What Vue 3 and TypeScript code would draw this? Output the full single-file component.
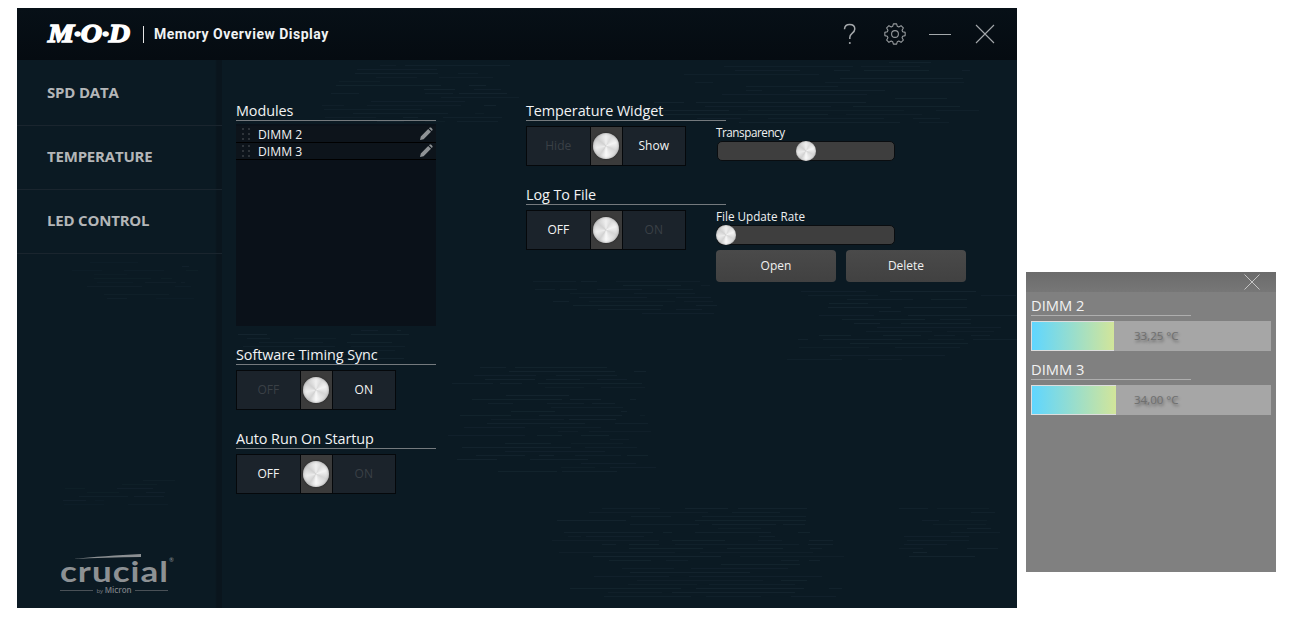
<script setup lang="ts">
const gearPath = (() => {
  const cx = 12, cy = 12, teeth = 8, ro = 10.3, ri = 8
  const pts: string[] = []
  for (let i = 0; i < teeth; i++) {
    const a = (i / teeth) * Math.PI * 2 - Math.PI / 2
    const step = (Math.PI * 2) / teeth
    const offs: [number, number][] = [[-0.3, ri], [-0.16, ro], [0.16, ro], [0.3, ri]]
    for (const [f, r] of offs) {
      const t = a + f * step * 1.25
      pts.push(`${(cx + Math.cos(t) * r).toFixed(2)} ${(cy + Math.sin(t) * r).toFixed(2)}`)
    }
  }
  return 'M' + pts.join('L') + 'Z'
})()

interface Dash { x: number; y: number; w: number; o: number }
let seed = 23
const rnd = () => {
  seed = (seed * 16807) % 2147483647
  return seed / 2147483647
}
const clusters: [number, number, number, number][] = [
  [533, 281, 186, 36],
  [786, 291, 234, 70],
  [447, 367, 213, 108],
  [551, 508, 294, 92],
  [879, 508, 126, 50],
  [320, 65, 200, 60],
  [640, 62, 360, 64],
  [230, 330, 180, 30],
  [70, 262, 130, 40],
  [60, 480, 120, 30]
]
const dashes: Dash[] = []
clusters.forEach(([cx, cy, cw, ch], idx) => {
  const faint = idx >= 8
  for (let y = 0; y < ch; y += 4) {
    let x = cx + rnd() * cw * 0.3
    const end = cx + cw - rnd() * cw * 0.25
    while (x < end) {
      const w = Math.min(8 + rnd() * cw * 0.5, end - x)
      if (rnd() > 0.22) {
        dashes.push({
          x: Math.round(x - 17),
          y: cy + y - 60,
          w: Math.round(w),
          o: (faint ? 0.02 : 0.035) + rnd() * 0.03
        })
      }
      x += w + 4 + rnd() * 30
    }
  }
})

const modules = ['DIMM 2', 'DIMM 3']
const temps = [
  { name: 'DIMM 2', value: '33,25 °C', fill: 83 },
  { name: 'DIMM 3', value: '34,00 °C', fill: 85 }
]
const navItems = ['SPD DATA', 'TEMPERATURE', 'LED CONTROL']
</script>

<template>
  <div class="page">
    <div class="window">
      <header class="topbar">
        <div class="brand">
          <span class="logo-box"><span class="logo">M·O·D</span></span>
          <span class="divider"></span>
          <span class="title">Memory Overview Display</span>
        </div>
        <div class="controls">
          <svg class="ctl ctl-help" width="16" height="24" viewBox="0 0 16 24" fill="none" stroke="#a4a8ab" stroke-width="1.5">
            <path d="M2.5 7.2C2.7 3.8 5 2.6 7.6 2.6c3 0 5.2 1.7 5.2 4.4 0 2-1 3-2.7 4.3-1.6 1.200-2.300 2.300-2.300 4.300v1.400" />
            <circle cx="7.800" cy="21" r="1" fill="#a4a8ab" stroke="none" />
          </svg>
          <svg class="ctl ctl-gear" width="24" height="24" viewBox="0 0 24 24" fill="none" stroke="#969a9d" stroke-width="1.100">
            <path :d="gearPath" stroke-linejoin="round" />
            <circle cx="12" cy="12" r="3.400" />
          </svg>
          <svg class="ctl ctl-min" width="22" height="24" viewBox="0 0 22 24" fill="none" stroke="#a4a8ab" stroke-width="1">
            <path d="M0 12.500h22" />
          </svg>
          <svg class="ctl ctl-close" width="20" height="20" viewBox="0 0 20 20" fill="none" stroke="#a4a8ab" stroke-width="1.100">
            <path d="M1 1l18 18M19 1L1 19" />
          </svg>
        </div>
      </header>
      <div class="body">
        <svg class="texture" width="1000" height="548" viewBox="0 0 1000 548" aria-hidden="true">
          <rect v-for="(d, i) in dashes" :key="i" :x="d.x" :y="d.y" :width="d.w" height="1" fill="#8fb4cc" :opacity="d.o" />
        </svg>
        <aside class="sidebar">
          <nav class="nav">
            <div v-for="item in navItems" :key="item" class="nav-item">{{ item }}</div>
          </nav>
          <div class="crucial">
            <svg class="swoosh" width="68" height="5" viewBox="0 0 68 5"><path d="M0 5C20 3 44 1 68 0v3C44 3 22 4 0 5z" fill="#8b8f92" /></svg>
            <div class="crucial-word">crucial<sup>®</sup></div>
            <div class="micron"><i></i><span>by <b>Micron</b></span><i></i></div>
          </div>
        </aside>
        <main class="content">
          <section class="col col-left">
            <h2 class="heading">Modules</h2>
            <div class="list">
              <div v-for="m in modules" :key="m" class="list-row">
                <span class="grip"><i v-for="n in 6" :key="n"></i></span>
                <span class="list-name">{{ m }}</span>
                <svg class="pencil" width="14" height="14" viewBox="0 0 14 14">
                  <path d="M1 13l.8-3.600L9.200 2l2.800 2.800-7.400 7.400zM10 1.200l.8-.6c.4-.3.900-.3 1.200 0l1.400 1.400c.3.300.3.800 0 1.200l-.6.8z" fill="#8f9396" />
                </svg>
              </div>
            </div>
            <h2 class="heading heading-gap">Software Timing Sync</h2>
            <div class="toggle">
              <span class="side off">OFF</span>
              <span class="knob-cell"><span class="knob"></span></span>
              <span class="side">ON</span>
            </div>
            <h2 class="heading heading-gap">Auto Run On Startup</h2>
            <div class="toggle">
              <span class="side">OFF</span>
              <span class="knob-cell"><span class="knob"></span></span>
              <span class="side off">ON</span>
            </div>
          </section>
          <section class="col col-right">
            <h2 class="heading">Temperature Widget</h2>
            <div class="setting">
              <div class="toggle">
                <span class="side off">Hide</span>
                <span class="knob-cell"><span class="knob"></span></span>
                <span class="side">Show</span>
              </div>
              <div class="slider-box">
                <div class="slider-label tight">Transparency</div>
                <div class="slider"><span class="thumb thumb-mid"></span></div>
              </div>
            </div>
            <h2 class="heading heading-gap">Log To File</h2>
            <div class="setting">
              <div class="toggle">
                <span class="side">OFF</span>
                <span class="knob-cell"><span class="knob"></span></span>
                <span class="side off">ON</span>
              </div>
              <div class="slider-box">
                <div class="slider-label">File Update Rate</div>
                <div class="slider"><span class="thumb"></span></div>
                <div class="buttons">
                  <button class="btn">Open</button>
                  <button class="btn">Delete</button>
                </div>
              </div>
            </div>
          </section>
        </main>
      </div>
    </div>
    <aside class="widget">
      <div class="widget-top">
        <svg width="16" height="16" viewBox="0 0 16 16" fill="none" stroke="#c4c4c4" stroke-width="1"><path d="M.5.500l15 15M15.500.500l-15 15" /></svg>
      </div>
      <div class="widget-body">
        <div v-for="t in temps" :key="t.name" class="temp">
          <div class="temp-name">{{ t.name }}</div>
          <div class="temp-bar">
            <div class="temp-fill" :style="{ width: t.fill + 'px' }"></div>
            <span class="temp-value">{{ t.value }}</span>
          </div>
        </div>
      </div>
    </aside>
  </div>
</template>

<style>
html, body { margin: 0; background: #fff; }
</style>

<style scoped>
.page {
  display: flex;
  align-items: flex-start;
  gap: 9px;
  padding: 8px 0 0 17px;
  width: 1293px;
  height: 639px;
  box-sizing: border-box;
  overflow: hidden;
  font-family: "Open Sans", "Noto Sans", sans-serif;
  color: #fff;
}
.window {
  width: 1000px;
  height: 600px;
  flex: none;
  display: flex;
  flex-direction: column;
  background: #0b1a23;
}
.topbar {
  height: 52px;
  flex: none;
  background: linear-gradient(#071017, #050b11);
  display: flex;
  align-items: center;
  justify-content: space-between;
  padding: 0 22px 0 31px;
}
.brand { display: flex; align-items: center; }
.logo-box { width: 83px; flex: none; display: block; }
.logo {
  display: inline-block;
  font-family: "Liberation Serif", serif;
  font-weight: 700;
  font-style: italic;
  font-size: 26px;
  line-height: 30px;
  letter-spacing: -0.3px;
  -webkit-text-stroke: 1.500px #fff;
  white-space: nowrap;
  transform: scaleX(1.13);
  transform-origin: left center;
}
.divider { width: 1px; height: 17px; background: #e5e5e5; margin: 0 10px 0 12px; }
.title {
  font-family: "Roboto", sans-serif;
  font-weight: 700;
  font-size: 14px;
  letter-spacing: 0.5px;
  color: #f0f2f3;
  white-space: nowrap;
}
.controls { display: flex; align-items: center; }
.ctl { display: block; }
.ctl-gear { margin-left: 25px; }
.ctl-min { margin-left: 22px; }
.ctl-close { margin-left: 24px; }
.body { position: relative; flex: 1; display: flex; min-height: 0; overflow: hidden; }
.texture { position: absolute; left: 0; top: 0; pointer-events: none; }
.sidebar {
  position: relative;
  width: 205px;
  flex: none;
  display: flex;
  flex-direction: column;
  justify-content: space-between;
  background: linear-gradient(90deg, transparent 0, transparent 198px, #0a151d 200px, #0a151d 205px);
}
.nav-item {
  box-sizing: border-box;
  height: 64px;
  border-bottom: 1px solid #1a252e;
  padding: 0 0 4px 30px;
  display: flex;
  align-items: center;
  font-size: 15px;
  font-weight: 700;
  color: #b4b6b8;
  letter-spacing: -0.2px;
}
.nav-item:first-child { height: 66px; padding-bottom: 2px; }
.crucial { margin: 0 0 13px 43px; width: 108px; position: relative; }
.swoosh { position: absolute; left: 13px; top: 2px; }
.crucial-word {
  font-family: "Lato", sans-serif;
  font-size: 35px;
  line-height: 32px;
  font-weight: 700;
  letter-spacing: 1px;
  color: #8d9194;
  transform: scaleY(0.84);
  transform-origin: bottom left;
  white-space: nowrap;
}
.crucial-word sup { font-size: 6px; font-weight: 400; vertical-align: 24px; letter-spacing: 0; line-height: 0; margin-left: 0; }
.micron {
  display: flex;
  align-items: center;
  gap: 3px;
  margin-top: 2px;
  font-size: 6px;
  line-height: 8px;
  color: #7a7f83;
  white-space: nowrap;
}
.micron i { flex: 1; height: 1px; background: #4a5157; }
.micron b { font-size: 8px; font-weight: 600; }
.content {
  position: relative;
  flex: 1;
  display: flex;
  padding: 41px 0 0 14px;
  gap: 90px;
}
.col { width: 200px; flex: none; }
.heading {
  margin: 0;
  height: 20px;
  box-sizing: border-box;
  font-size: 14.4px;
  line-height: 19px;
  font-weight: 400;
  letter-spacing: -0.07px;
  color: #f2f3f4;
  border-bottom: 1px solid #757a7e;
  white-space: nowrap;
}
.heading-gap { margin-top: 19px; }
.list {
  margin-top: 3px;
  height: 202px;
  background: #0a1119;
  padding-top: 2px;
  box-sizing: border-box;
}
.list-row {
  height: 17px;
  box-sizing: border-box;
  display: flex;
  align-items: center;
  border-bottom: 1px solid #000;
  background: #0d141b;
  padding: 0 3px 0 6px;
  font-size: 12.200px;
  color: #f0f1f2;
}
.grip {
  display: grid;
  grid-template-columns: 2px 2px;
  grid-auto-rows: 2px;
  gap: 3px 4px;
  margin-right: 8px;
  width: 8px;
}
.grip i { background: #2e343a; }
.list-name { flex: 1; }
.toggle {
  margin-top: 5px;
  width: 160px;
  height: 40px;
  box-sizing: border-box;
  display: flex;
  background: #1b232b;
  border: 1px solid #05080b;
  font-size: 12px;
  color: #f2f3f4;
  flex: none;
}
.side { flex: 1; display: flex; align-items: center; justify-content: center; padding-bottom: 2px; box-sizing: border-box; }
.side.off { color: #3a4046; }
.knob-cell {
  width: 33px;
  flex: none;
  background: #3b3b3b;
  border-left: 1px solid #05080b;
  border-right: 1px solid #05080b;
  box-sizing: border-box;
  display: flex;
  align-items: center;
  justify-content: center;
}
.knob, .thumb {
  display: block;
  border-radius: 50%;
  background: conic-gradient(from 0deg, #f0f0f0, #dcdcdc 30deg, #f4f4f4 70deg, #d6d6d6 115deg, #e6e6e6 150deg, #fafafa 180deg, #d2d2d2 215deg, #ececec 260deg, #d0d0d0 310deg, #f0f0f0);
}
.knob { width: 26px; height: 26px; box-shadow: 0 0 2px #222, inset 0 0 3px rgba(120, 120, 120, 0.7); }
.setting { display: flex; gap: 30px; width: 440px; }
.slider-box { width: 250px; flex: none; padding-top: 3px; }
.slider-label { font-size: 11.700px; line-height: 16px; margin-bottom: 1px; color: #eef0f1; white-space: nowrap; }
.slider-label.tight { letter-spacing: -0.45px; }
.slider {
  position: relative;
  width: 178px;
  height: 20px;
  margin-left: 1px;
  box-sizing: border-box;
  background: #3e3e3e;
  border: 1px solid #0a0d10;
  border-radius: 5px;
}
.thumb {
  position: absolute;
  left: -2px;
  top: -1px;
  width: 20px;
  height: 20px;
  box-shadow: inset 0 0 2px rgba(120, 120, 120, 0.7);
}
.thumb-mid { left: 78px; }
.buttons { display: flex; gap: 10px; margin-top: 5px; }
.btn {
  width: 120px;
  height: 32px;
  background: linear-gradient(#4a4a4a, #414141);
  border: none;
  border-radius: 4px;
  color: #f0f0f0;
  font-family: inherit;
  font-size: 12px;
  padding: 0 0 2px;
}
.widget {
  margin-top: 264px;
  width: 250px;
  height: 300px;
  flex: none;
  background: #808080;
  display: flex;
  flex-direction: column;
}
.widget-top {
  height: 20px;
  background: linear-gradient(#6b6b6b, #777);
  display: flex;
  justify-content: flex-end;
  align-items: center;
  padding-right: 16px;
}
.widget-body { padding: 4px 5px 0; }
.temp { margin-bottom: 9px; }
.temp-name {
  width: 160px;
  height: 20px;
  box-sizing: border-box;
  font-size: 14.700px;
  line-height: 19px;
  color: #f2f2f2;
  border-bottom: 1px solid #aeaeae;
}
.temp-bar {
  position: relative;
  margin-top: 5px;
  width: 240px;
  height: 30px;
  background: #a6a6a6;
}
.temp-fill {
  height: 30px;
  box-sizing: border-box;
  border: 1px solid #ddd;
  border-right: none;
  background: linear-gradient(90deg, #5fd6ff, #d2e59a);
}
.temp-value {
  position: absolute;
  left: 103px;
  top: 7px;
  font-size: 11.500px;
  line-height: 16px;
  color: #6f6f6f;
  text-shadow: 1px 2px 3px rgba(0, 0, 0, 0.45);
}
</style>
